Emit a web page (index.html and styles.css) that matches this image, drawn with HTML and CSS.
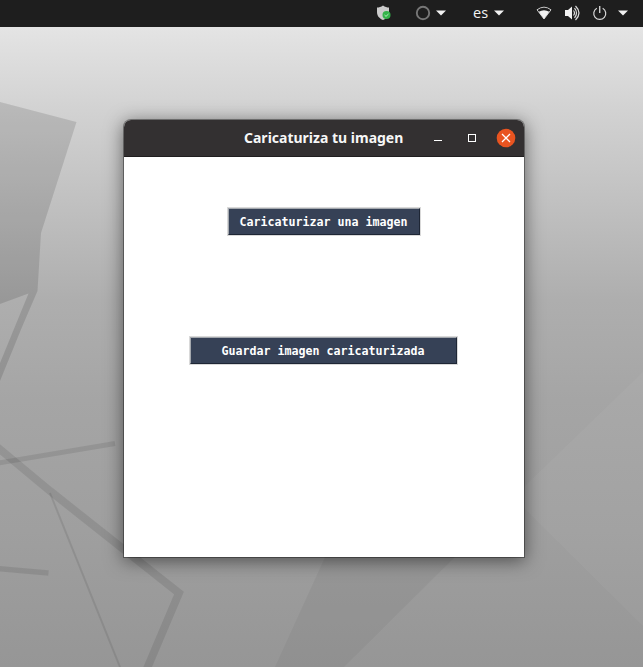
FILE: index.html
```html
<!DOCTYPE html>
<html lang="es">
<head>
<meta charset="utf-8">
<title>Caricaturiza tu imagen</title>
<link rel="stylesheet" href="styles.css">
</head>
<body>
<svg class="wallpaper" viewBox="0 0 643 667" aria-hidden="true">
  <path class="facet-dark" d="M0 102L76.500 122L41 233L37.500 291L22 327L0 381V363L28.500 293.500L0 304Z"/>
  <path class="facet-light" d="M643 372L524 487V508L643 626Z"/>
  <path class="facet-shade" d="M325 557L275 667H344L455 557Z"/>
  <path class="lines" stroke-width="8" d="M-4 446L50 491L179 593L146 671"/>
  <path class="lines" stroke-width="5" d="M-2 463L115 443.500"/>
  <path class="lines" stroke-width="5.500" d="M-2 568.500L48.500 573"/>
  <path class="lines" stroke-width="2" d="M50 493L120 667"/>
</svg>
<header class="topbar">
  <svg class="shield" width="15" height="16" viewBox="0 0 15 16"><path fill="#ccc" d="M7 .5C5 2 3 2.500 1 2.500V7c0 4 2.500 6.500 6 8 3.500-1.500 6-4 6-8V2.500C11 2.500 9 2 7 .5Z"/><circle cx="10.500" cy="10" r="4" fill="#34b44a"/><path d="M8.500 10l1.500 1.400L12.500 9" fill="none" stroke="#b9efc0"/></svg>
  <svg class="ring" width="16" height="16" viewBox="0 0 16 16"><circle cx="8" cy="8" r="6.200" fill="none" stroke="#777" stroke-width="1.900"/></svg>
  <svg class="arrow" width="10" height="6" viewBox="0 0 10 6"><path d="M0 .5h10L5 5.500z"/></svg>
  <span class="lang">es</span>
  <svg class="arrow" width="10" height="6" viewBox="0 0 10 6"><path d="M0 .5h10L5 5.500z"/></svg>
  <svg class="wifi" width="16" height="16" viewBox="0 0 16 16"><path d="M1 4.800Q8 -.5 15 4.800L8 14Z" fill="none" stroke="#c8c8c8"/><path d="M2.700 6.800Q8 3.800 13.300 6.800L8 14Z" fill="#f2f2f2"/></svg>
  <svg class="volume" width="16" height="16" viewBox="0 0 16 16"><path d="M1 5h3L8 1.500v13L4 11H1z" fill="#f2f2f2"/><path d="M9.500 5.500q2 2.500 0 5M10.500 3.200q4 4.800 0 9.600M11.500 1q7 7 0 14" fill="none" stroke="#ddd" stroke-width="1.200"/></svg>
  <svg class="power" width="16" height="16" viewBox="0 0 16 16"><path d="M4.800 3.200a6 6 0 1 0 5.900 0" fill="none" stroke="#d8d8d8" stroke-width="1.200"/><path d="M7.750 1v7" stroke="#eee" stroke-width="1.200"/></svg>
  <svg class="arrow last" width="10" height="6" viewBox="0 0 10 6"><path d="M0 .5h10L5 5.500z"/></svg>
</header>
<main class="window">
  <div class="titlebar">
    <h1 class="title">Caricaturiza tu imagen</h1>
    <svg class="controls" width="84" height="20" viewBox="0 0 84 20">
      <path d="M1 12.500h8" stroke="#fff"/>
      <rect x="35.500" y="6.500" width="7" height="7" fill="none" stroke="#fff"/>
      <circle cx="73" cy="10" r="9.300" fill="#e95420"/>
      <path d="M69 6l8 8M77 6l-8 8" stroke="#fff" stroke-width="1.300"/>
    </svg>
  </div>
  <div class="content">
    <button class="btn open">Caricaturizar una imagen</button>
    <button class="btn save">Guardar imagen caricaturizada</button>
  </div>
</main>
</body>
</html>
```
FILE: styles.css
```css
* { box-sizing: border-box; }
body {
  margin: 0;
  height: 667px;
  overflow: hidden;
  background: linear-gradient(#e4e4e4 27px, #d2d2d2 110px, #c1c1c1 200px, #aeaeae 300px, #a5a5a5 400px, #9f9f9f 530px, #969696 667px);
}
.wallpaper { position: absolute; inset: 0; width: 643px; height: 667px; z-index: -1; }
.facet-dark { fill: rgba(0, 0, 0, .12); }
.facet-light { fill: rgba(255, 255, 255, .035); }
.facet-shade { fill: rgba(0, 0, 0, .04); }
.lines { fill: none; stroke: rgba(0, 0, 0, .09); }
.topbar {
  display: flex;
  align-items: center;
  height: 27px;
  padding: 0 0 1px 376px;
  background: #1e1e1e;
}
.topbar svg { flex: none; }
.arrow { fill: #f2f2f2; }
.ring { margin: 0 5px 0 24px; }
.lang {
  width: 16px;
  margin: 0 5px 0 27px;
  color: #f2f2f2;
  font: 14.500px/26px "Open Sans", sans-serif;
}
.wifi { margin-left: 32px; }
.volume { margin-left: 12px; }
.power { margin-left: 12px; }
.last { margin-left: 10px; }
.window {
  width: 400px;
  height: 437px;
  margin: 93px 0 0 124px;
  background: #fff;
  border-radius: 7px 7px 0 0;
  box-shadow: 0 0 0 1px rgba(0, 0, 0, .35), 0 3px 18px 1px rgba(0, 0, 0, .5);
}
.titlebar {
  display: flex;
  align-items: center;
  justify-content: space-between;
  height: 37px;
  padding: 0 7px 0 120px;
  border-bottom: 1px solid #201e1f;
  border-radius: 7px 7px 0 0;
  background: #333031;
}
.title {
  margin: 0;
  color: #f7f7f7;
  font: bold 14px/38px "Noto Sans", sans-serif;
  white-space: nowrap;
}
.content { padding-top: 50px; }
.btn {
  display: block;
  height: 29px;
  padding: 1px 1px 0 0;
  border: 2px solid;
  border-color: #a4a8ae #1e2635 #1e2635 #a4a8ae;
  outline: 1px solid #d9d9d9;
  outline-offset: -1px;
  border-radius: 0;
  background: #364156;
  color: #fff;
  font: bold 11.63px/25px "DejaVu Sans Mono", monospace;
  white-space: pre;
}
.open { width: 194px; margin-left: 103px; }
.save { width: 269px; margin: 100px 0 0 65px; }
```
